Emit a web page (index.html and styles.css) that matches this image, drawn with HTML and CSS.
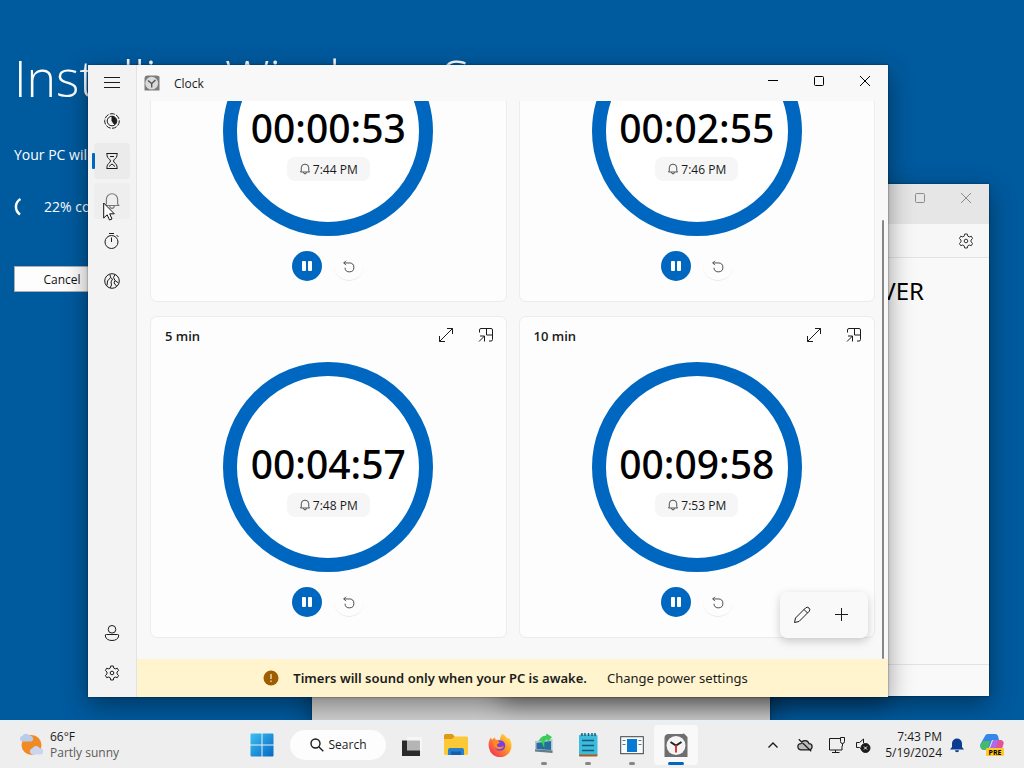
FILE: index.html
```html
<!DOCTYPE html>
<html lang="en">
<head>
<meta charset="utf-8">
<title>Clock</title>
<link rel="stylesheet" href="styles.css">
</head>
<body>
<svg class="defs" aria-hidden="true">
  <symbol id="bell" viewBox="0 0 16 16"><path d="M2 12 L3 10.500 V6.500 a5 5 0 0 1 10 0 V10.500 L14 12 Z M6 12.500 a2 2 0 0 0 4 0"/></symbol>
  <symbol id="gear" viewBox="0 0 16 16"><path d="M6.700 1h2.600l.5 2.100 1.400.8 2.100-.7 1.300 2.300-1.600 1.500v1.900l1.600 1.500-1.300 2.300-2.100-.7-1.400.8-.5 2.200H6.700l-.5-2.200-1.400-.8-2.100.7-1.300-2.300 1.600-1.500V7L1.400 5.500l1.300-2.300 2.100.7 1.400-.8z"/><circle cx="8" cy="8" r="1.800"/></symbol>
  <symbol id="expand" viewBox="0 0 16 16"><path d="M1.500 14.500 14.500 1.500M9 1.500h5.500V7M1.500 9v5.500H7"/></symbol>
  <symbol id="pin" viewBox="0 0 16 16"><path d="M1.500 5.500V3a1.500 1.500 0 0 1 1.500-1.500H13A1.500 1.500 0 0 1 14.500 3V12.500a1.500 1.500 0 0 1-1.500 1.500H11M8.500 1.500V8H14.500M1 14.500 6.500 9M2 9H6.500V14.500"/></symbol>
  <symbol id="reset" viewBox="0 0 16 16"><path d="M2 4.500H8.500a5.100 5.100 0 1 1-5.100 5.500M4.500 2 2 4.500 4.500 7"/></symbol>
  <symbol id="max" viewBox="0 0 12 12"><rect x="1.500" y="1.500" width="9" height="9" rx="1"/></symbol>
  <symbol id="close" viewBox="0 0 12 12"><path d="M1 1 11 11M11 1 1 11"/></symbol>
</svg>
<div class="desktop">
  <main class="workspace">
    <section class="installer">
      <h1>Installing Windows Server</h1>
      <p class="notice">Your PC will restart several times</p>
      <div class="progress">
        <svg class="spinner" viewBox="0 0 16 20"><path d="M6.500 2C0.500 5.500 0.500 13.500 6 17.500" /></svg>
        <span>22% complete</span>
      </div>
      <button class="cancel" type="button">Cancel</button>
    </section>

    <section class="window sheet"></section>

    <section class="window notes">
      <header class="notes-title">
        <button type="button" aria-label="Maximize"><svg class="ico s12"><use href="#max"/></svg></button>
        <button type="button" aria-label="Close"><svg class="ico s12"><use href="#close"/></svg></button>
      </header>
      <div class="notes-tools"><button type="button" aria-label="Settings"><svg class="ico s16"><use href="#gear"/></svg></button></div>
      <div class="notes-body">SERVER</div>
      <footer class="notes-status"></footer>
    </section>

    <section class="window clock">
      <nav class="rail">
        <button class="rail-item menu" type="button" aria-label="Menu"><svg class="ico s16" viewBox="0 0 16 16"><path d="M0 3.500H16M0 8.500H16M0 13.500H16"/></svg></button>
        <button class="rail-item" type="button" aria-label="Focus"><svg class="ico s16" viewBox="0 0 16 16"><circle cx="8" cy="8" r="7.300" stroke-dasharray="5 1.400"/><circle cx="8" cy="8" r="4.800"/><path class="solid" d="M8 4V8L10.500 11.500A4.500 4.500 0 0 0 8 3.500Z"/></svg></button>
        <button class="rail-item active" type="button" aria-label="Timer"><svg class="ico s16" viewBox="0 0 16 16"><path d="M2.500.5H13.500M2.500 15.500H13.500M3 .5V2.500C3 5 6.500 6.500 6.500 8S3 11 3 13.500V15.500M13 .5V2.500C13 5 9.500 6.500 9.500 8S13 11 13 13.500V15.500M6 3.500H10M5 13.500 8 11 11 13.500"/></svg></button>
        <button class="rail-item hover" type="button" aria-label="Alarm"><svg class="ico s18"><use href="#bell"/></svg></button>
        <button class="rail-item" type="button" aria-label="Stopwatch"><svg class="ico s16" viewBox="0 0 16 16"><circle cx="7.500" cy="9" r="6.500"/><path d="M5 .5H10M7.500 4.500V9M12.500 2 14.500 4"/></svg></button>
        <button class="rail-item" type="button" aria-label="World clock"><svg class="ico s16" viewBox="0 0 16 16"><circle cx="8" cy="8" r="7.300"/><path d="M6 1.500 6.500 4.500 3.500 8 3 12.500M6.500 4.500 8.500 6 7 9 7.500 12 6 15M11 1.500 9.500 4.500 11 7.500 10 10 12.500 13M11 7.500 14.500 10"/></svg></button>
        <span class="rail-space"></span>
        <button class="rail-item" type="button" aria-label="Account"><svg class="ico s16" viewBox="0 0 16 16"><circle cx="8" cy="4.300" r="3.800"/><path d="M2.500 9.500H13.500a1.200 1.200 0 0 1 1.200 1.500C14.200 14 11.500 15.500 8 15.500S1.800 14 1.300 11A1.200 1.200 0 0 1 2.500 9.500Z"/></svg></button>
        <button class="rail-item" type="button" aria-label="Settings"><svg class="ico s16"><use href="#gear"/></svg></button>
      </nav>
      <div class="pane">
        <header class="titlebar">
          <svg class="app-icon" viewBox="0 0 16 16"><path d="M3.500.5H13L15.500 1.500V15.500H.5V3.500a3 3 0 0 1 3-3Z" fill="#7c7c7c"/><circle cx="7.700" cy="8.200" r="6.400" fill="#dadada"/><path d="M4 5.500 7.700 8.500 11.500 5M7.700 8.500V12.500" stroke="#555" stroke-width="1.400" fill="none"/></svg>
          <span class="app-name">Clock</span>
          <button type="button" aria-label="Minimize"><svg class="ico s12" viewBox="0 0 12 12"><path d="M1 5.500H11"/></svg></button>
          <button type="button" aria-label="Maximize"><svg class="ico s12"><use href="#max"/></svg></button>
          <button type="button" aria-label="Close"><svg class="ico s12"><use href="#close"/></svg></button>
        </header>
        <div class="scroller">
          <div class="timers">
            <article class="card">
              <header class="card-head"></header>
              <div class="ring"><time class="left">00:00:53</time><span class="due"><svg class="ico s12"><use href="#bell"/></svg>7:44 PM</span></div>
              <div class="controls"><button class="pause" type="button" aria-label="Pause"><svg viewBox="0 0 12 12"><rect x="1" y="1" width="4" height="10" rx="1"/><rect x="7" y="1" width="4" height="10" rx="1"/></svg></button><button class="reset" type="button" aria-label="Reset"><svg class="ico s14"><use href="#reset"/></svg></button></div>
            </article>
            <article class="card">
              <header class="card-head"></header>
              <div class="ring"><time class="left">00:02:55</time><span class="due"><svg class="ico s12"><use href="#bell"/></svg>7:46 PM</span></div>
              <div class="controls"><button class="pause" type="button" aria-label="Pause"><svg viewBox="0 0 12 12"><rect x="1" y="1" width="4" height="10" rx="1"/><rect x="7" y="1" width="4" height="10" rx="1"/></svg></button><button class="reset" type="button" aria-label="Reset"><svg class="ico s14"><use href="#reset"/></svg></button></div>
            </article>
            <article class="card">
              <header class="card-head"><h2>5 min</h2><button type="button" aria-label="Expand"><svg class="ico s16"><use href="#expand"/></svg></button><button type="button" aria-label="Keep on top"><svg class="ico s16"><use href="#pin"/></svg></button></header>
              <div class="ring"><time class="left">00:04:57</time><span class="due"><svg class="ico s12"><use href="#bell"/></svg>7:48 PM</span></div>
              <div class="controls"><button class="pause" type="button" aria-label="Pause"><svg viewBox="0 0 12 12"><rect x="1" y="1" width="4" height="10" rx="1"/><rect x="7" y="1" width="4" height="10" rx="1"/></svg></button><button class="reset" type="button" aria-label="Reset"><svg class="ico s14"><use href="#reset"/></svg></button></div>
            </article>
            <article class="card">
              <header class="card-head"><h2>10 min</h2><button type="button" aria-label="Expand"><svg class="ico s16"><use href="#expand"/></svg></button><button type="button" aria-label="Keep on top"><svg class="ico s16"><use href="#pin"/></svg></button></header>
              <div class="ring"><time class="left">00:09:58</time><span class="due"><svg class="ico s12"><use href="#bell"/></svg>7:53 PM</span></div>
              <div class="controls"><button class="pause" type="button" aria-label="Pause"><svg viewBox="0 0 12 12"><rect x="1" y="1" width="4" height="10" rx="1"/><rect x="7" y="1" width="4" height="10" rx="1"/></svg></button><button class="reset" type="button" aria-label="Reset"><svg class="ico s14"><use href="#reset"/></svg></button></div>
            </article>
          </div>
          <span class="thumb"></span>
          <div class="fab">
            <button type="button" aria-label="Edit timers"><svg class="ico s18" viewBox="0 0 18 18"><path d="M1.500 16.500 2.500 12 12.500 2a2.300 2.300 0 0 1 3.500 3.500L6 15.500ZM11 3.500 14.500 7"/></svg></button>
            <button type="button" aria-label="Add timer"><svg class="ico s16" viewBox="0 0 16 16"><path d="M7.500 1V14M1 7.500H14"/></svg></button>
          </div>
        </div>
        <div class="banner">
          <svg class="warn" viewBox="0 0 16 16"><circle cx="8" cy="8" r="7.500" fill="#9d5d00"/><path d="M8 4V9M8 10.500V12" stroke="#fff4ce" stroke-width="1.200"/></svg>
          <strong>Timers will sound only when your PC is awake.</strong>
          <a href="#power">Change power settings</a>
        </div>
      </div>
    </section>
    <svg class="cursor" viewBox="0 0 12 19"><path d="M.7 1V16L4.200 12.800 6.500 18 9 17 6.700 11.800H11.300Z" fill="#fff" stroke="#111"/></svg>
  </main>

  <footer class="taskbar">
    <a class="weather" href="#weather">
      <svg class="s24" viewBox="0 0 24 24"><circle cx="12.500" cy="12" r="10" fill="#f08a24"/><path d="M3 8.500a3 3 0 0 1 .5-5.800A4 4 0 0 1 10.500 3a2.800 2.800 0 0 1 1.500 5.500Z" fill="#b9cdea"/><path d="M13 21.500a3.200 3.200 0 0 1 .5-6.200A4.200 4.200 0 0 1 21 15.500a3 3 0 0 1 1 6Z" fill="#ccd5ef"/></svg>
      <span><b>66°F</b><i>Partly sunny</i></span>
    </a>
    <div class="apps">
      <button class="app" type="button" aria-label="Start"><svg class="s24" viewBox="0 0 24 24"><defs><linearGradient id="w" x1="0" y1="0" x2="1" y2="1"><stop offset="0" stop-color="#3cc1f2"/><stop offset="1" stop-color="#0567c4"/></linearGradient></defs><path fill="url(#w)" d="M.5 1.500A1 1 0 0 1 1.500.5H11.500V11.500H.5ZM12.500.5H22.500A1 1 0 0 1 23.500 1.500V11.500H12.500ZM.5 12.500H11.500V23.500H1.500A1 1 0 0 1 .5 22.500ZM12.500 12.500H23.500V22.500A1 1 0 0 1 22.500 23.500H12.500Z"/></svg></button>
      <button class="search" type="button"><svg class="ico s14 bold" viewBox="0 0 14 14"><circle cx="5.500" cy="5.500" r="4.500"/><path d="M9 9 13.300 13.300"/></svg>Search</button>
      <button class="app" type="button" aria-label="Task view"><svg class="s24" viewBox="0 0 24 24"><rect x="7" y="4" width="15" height="14" rx="1" fill="#f7f7f7" opacity=".9"/><path d="M2 7.500H7V17H20V23H2Z" fill="#2b2b2b"/><rect x="7" y="7.500" width="13" height="10" fill="#b5b5b5"/></svg></button>
      <button class="app" type="button" aria-label="File Explorer"><svg class="s24" viewBox="0 0 24 24"><path d="M0 2.500A1.500 1.500 0 0 1 1.500 1H8.500L11 4V7H0Z" fill="#dc9a18"/><path d="M0 6H8L10.500 3.500H22.500A1.500 1.500 0 0 1 24 5V20.500A1.500 1.500 0 0 1 22.500 22H1.500A1.500 1.500 0 0 1 0 20.500Z" fill="#fbc936"/><path d="M4 22V17a2 2 0 0 1 2-2H18a2 2 0 0 1 2 2V22Z" fill="#2580cf"/><path d="M7 18.500H17V22H7Z" fill="#155ea8"/></svg></button>
      <button class="app" type="button" aria-label="Firefox"><svg class="s24" viewBox="0 0 24 24"><defs><linearGradient id="f" x1="1" y1="0" x2="0" y2="1"><stop offset="0" stop-color="#ffe83b"/><stop offset=".45" stop-color="#ff9226"/><stop offset="1" stop-color="#ee1c62"/></linearGradient></defs><path fill="url(#f)" d="M14 1C17 2 19 5 20 6L20.500 4.500C23.500 8 24 12 23 16A11.300 11.300 0 0 1 1 15C0 11 1 7 3 4.500L4 7 6.500 4.500 8 7C9 6.500 11 6.500 12 7 12 4.500 13 2.500 14 1Z"/><circle cx="12" cy="12.500" r="5.300" fill="#7b3fe0"/><path d="M5 8C8 7 10.500 8 12 9.500L9 11.500C8 14 12 15 16 13 14 17.500 7.500 17 6 13Z" fill="#ff8a22"/></svg></button>
      <button class="app" type="button" aria-label="Setup"><svg class="s24" viewBox="0 0 24 24"><path d="M3 8 20.500 6V19L3 18Z" fill="#b2c6d4"/><path d="M4.500 10 19 8V17L4.500 16Z" fill="#246f9d"/><path d="M3 18.500 20.500 20V17.500L3 16.500Z" fill="#667a88"/><path d="M6.500 8.500C8 4.500 11 2.500 14 2.800L14.500.5 20 4 16 8.500 15 6.500C12.500 7 12 10 12.500 14.500 10.500 13 10 10.500 10 8Z" fill="#38cf56"/></svg><span class="dot"></span></button>
      <button class="app" type="button" aria-label="Notepad"><svg class="s24" viewBox="0 0 24 24"><rect x="3" y="1.500" width="18.500" height="21" rx="1.500" fill="#3dbbdc"/><path d="M3 21.500H21.500V22.500a1 1 0 0 1-1 1H4a1 1 0 0 1-1-1Z" fill="#ad5b1b"/><path d="M6 0V3M9 0V3M12.500 0V3M16 0V3M19 0V3M6 7.500H18M6 12.500H18M6 17.500H18" stroke="#165978" stroke-width="1.400"/></svg><span class="dot"></span></button>
      <button class="app" type="button" aria-label="Viewer"><svg class="s24" viewBox="0 0 24 24"><rect x=".7" y="3.700" width="22.600" height="17" fill="#fafafa" stroke="#3b4248"/><rect x="7" y="6" width="10" height="13" fill="#087ad4"/><path d="M2.500 7.500H5.500M2.500 11.500H5.500M18.500 7.500H21.500M18.500 11.500H21.500" stroke="#52748e"/></svg><span class="dot"></span></button>
      <button class="app current" type="button" aria-label="Clock"><svg class="s24" viewBox="0 0 24 24"><path d="M4 1H18L20 .5 23.500 4V24H.5V5a4 4 0 0 1 3.500-4Z" fill="#6e6e6e"/><circle cx="12" cy="12.500" r="9.500" fill="#f4f4f4"/><path d="M6.500 9 12 12.500 17.500 9" stroke="#222" stroke-width="2" fill="none"/><path d="M12 12V19.500" stroke="#d8262b" stroke-width="1.800"/></svg><span class="dot"></span></button>
    </div>
    <div class="tray">
      <button type="button" class="t32" aria-label="Hidden icons"><svg class="ico s12 bold" viewBox="0 0 12 12"><path d="M1.500 8.500 6 4 10.500 8.500"/></svg></button>
      <button type="button" class="t32" aria-label="Cloud storage"><svg class="ico s16 bold" viewBox="0 0 18 18"><path class="grey" d="M4.500 14.500A3.500 3.500 0 0 1 4.500 7.500 4.700 4.700 0 0 1 13.500 7.500 3.500 3.500 0 0 1 13.500 14.500ZM2 2.500 16 16"/></svg></button>
      <button type="button" class="t32" aria-label="Network"><svg class="ico s18" viewBox="0 0 18 18"><path d="M12 2.500H1.500V14H14V10M7.500 14V16.500M4 16.500H11.500M12.500 1.500H16.500V5.500a2 2 0 0 1-4 0ZM14.500 7.500V10"/></svg></button>
      <button type="button" class="t20" aria-label="Sound muted"><svg class="ico s16" viewBox="0 0 16 16"><path d="M8 13.500 4.500 10.500H1.500V5.500H4.500L8.500 2V6"/><circle class="solid" cx="10.500" cy="11" r="4.500"/><path d="M9 9.500 12 12.500M12 9.500 9 12.500" stroke="#fff"/></svg></button>
      <time class="now">7:43 PM<br>5/19/2024</time>
      <button type="button" class="t30" aria-label="Notifications"><svg class="s16" viewBox="0 0 16 16"><path d="M1 12.500 3 10V6.500a5 5 0 0 1 10 0V10L15 12.500ZM6 13.200h4a2 2 0 0 1-4 0Z" fill="#0a3c91"/></svg></button>
      <button type="button" class="t40" aria-label="Copilot"><svg class="s24" viewBox="0 0 24 24"><path d="M5 3a3 3 0 0 1 3-2H15a3 3 0 0 1 3 2L19 7H12L9 15H3C0 15 0 13 .5 11Z" fill="#3486e8"/><path d="M3 8H10L8 17H3C0 16 0 13 1 11Z" fill="#46b96a"/><path d="M14 7H21a3 3 0 0 1 2.500 4L21 19H12Z" fill="#e0549b"/><path d="M13 7H18L16 15H10Z" fill="#af6ae6"/><rect x="6" y="15" width="18" height="8" rx="1" fill="#ffc928"/><text x="15" y="22" class="pre">PRE</text></svg></button>
    </div>
  </footer>
</div>
</body>
</html>
```
FILE: styles.css
```css
* { box-sizing: border-box; }
body { margin: 0; font-family: "Open Sans", "Noto Sans", sans-serif; font-size: 12px; color: #1b1b1b; }
button { font: inherit; color: inherit; border: 0; padding: 0; background: none; display: flex; align-items: center; justify-content: center; }
h1, h2, p { margin: 0; }
a { color: inherit; text-decoration: none; }
.defs { position: absolute; width: 0; height: 0; }
.ico { fill: none; stroke: currentColor; stroke-width: 1; flex: none; }
.bold { stroke-width: 1.4; }
.solid { fill: currentColor; }
.grey { fill: #bbb; }
.s12 { width: 12px; height: 12px; }
.s14 { width: 14px; height: 14px; }
.s16 { width: 16px; height: 16px; }
.s18 { width: 18px; height: 18px; }
.s24 { width: 24px; height: 24px; flex: none; }

.desktop { min-height: 100vh; display: flex; flex-direction: column; background: #005a9e; }
.workspace { flex: 1; position: relative; overflow: hidden; }
.window { position: absolute; overflow: hidden; box-shadow: 0 0 2px rgba(0, 0, 0, .5), 0 8px 24px rgba(0, 0, 0, .4); }

.installer { color: #fff; padding: 44px 14px; display: flex; flex-direction: column; align-items: flex-start; }
.installer h1 { font-size: 50px; font-weight: 300; line-height: 68px; white-space: nowrap; }
.notice { font-size: 14px; line-height: 20px; margin-top: 33px; }
.progress { display: flex; align-items: center; gap: 14px; font-size: 14px; line-height: 20px; margin: 32px 0 49px; }
.spinner { width: 16px; height: 20px; fill: none; stroke: #fff; stroke-width: 2.5; }
.cancel { width: 96px; height: 26px; background: #fdfdfd; color: #111; border: 1px solid #adadad; }

.sheet { left: 312px; right: 254px; top: 400px; bottom: 0; background: #d0d0d0; }
.notes { left: 500px; right: 35px; top: 184px; bottom: 24px; background: #f9f9f9; display: flex; flex-direction: column; }
.notes-title { height: 40px; padding-bottom: 12px; background: #e6e6e6; color: #8a8a8a; display: flex; justify-content: flex-end; }
.notes-title button { width: 46px; }
.notes-tools { height: 34px; padding-right: 15px; border-bottom: 1px solid #e3e3e3; background: #f7f7f7; display: flex; justify-content: flex-end; align-items: center; color: #333; }
.notes-body { flex: 1; padding: 16px 65px 0 0; font-family: "Noto Sans", sans-serif; font-size: 24px; line-height: 34px; text-align: right; color: #000; }
.notes-status { height: 32px; border-top: 1px solid #e3e3e3; }

.clock { left: 88px; right: 136px; top: 65px; bottom: 23px; background: #f8f8f8; display: flex; }
.rail { width: 49px; padding: 0 6px 6px; background: #f3f3f3; border-right: 1px solid #e3e3e3; display: flex; flex-direction: column; gap: 4px; }
.rail-item { width: 36px; height: 36px; border-radius: 4px; flex: none; }
.rail-item.menu { height: 34px; }
.rail-item.active { background: #ebebeb; position: relative; }
.rail-item.active::before { content: ""; position: absolute; left: -2px; top: 10px; width: 3px; height: 16px; background: #0067c0; border-radius: 1px; }
.rail-item.hover { background: #eee; color: #777; }
.rail-space { flex: 1; }
.pane { flex: 1; min-width: 0; display: flex; flex-direction: column; }
.titlebar { height: 36px; padding-left: 7px; display: flex; align-items: center; }
.titlebar button { width: 46px; height: 32px; align-self: flex-start; color: #000; }
.app-icon { width: 16px; height: 16px; }
.app-name { margin-left: 14px; flex: 1; }
.scroller { flex: 1; min-height: 0; position: relative; overflow: hidden; padding: 0 13px 21px; display: flex; flex-direction: column; justify-content: flex-end; }
.timers { display: grid; grid-template-columns: 1fr 1fr; gap: 14px 12px; }
.card { background: #fdfdfd; border: 1px solid #ececec; border-radius: 7px; padding-bottom: 20px; display: flex; flex-direction: column; align-items: center; }
.card-head { align-self: stretch; height: 38px; margin-bottom: 7px; padding-left: 14px; display: flex; align-items: center; }
.card-head h2 { flex: 1; font-size: 13px; font-weight: 600; }
.card-head button { width: 40px; height: 36px; align-self: flex-start; }
.ring { width: 210px; height: 210px; border: 14px solid #0067c0; border-radius: 50%; background: #fff; display: flex; flex-direction: column; align-items: center; padding-top: 63px; }
.left { font-family: "Noto Sans", sans-serif; font-size: 39px; line-height: 50px; font-weight: 500; color: #000; }
.due { margin-top: 4px; height: 24px; padding: 0 12px; border-radius: 8px; background: #f6f6f6; font-size: 12px; display: flex; align-items: center; gap: 2px; }
.controls { margin-top: 15px; display: flex; gap: 12px; }
.controls button { width: 30px; height: 30px; border-radius: 50%; }
.pause { background: #0067c0; }
.pause svg { width: 12px; height: 12px; fill: #fff; }
.reset { border-bottom: 1px solid #e8e8e8; color: #333; }
.thumb { position: absolute; right: 4px; top: 119px; bottom: 0; width: 2px; background: #868686; border-radius: 1px; }
.fab { position: absolute; right: 20px; bottom: 21px; height: 46px; padding: 0 6px 0 2px; border-radius: 7px; background: #f9f9f9; box-shadow: 0 3px 10px rgba(0, 0, 0, .2); display: flex; }
.fab button { width: 40px; height: 46px; }
.banner { height: 38px; padding-right: 14px; background: #fff4ce; display: flex; align-items: center; justify-content: center; font-family: "Noto Sans", sans-serif; font-size: 13px; }
.warn { width: 16px; height: 16px; margin-right: 14px; }
.banner strong { font-weight: 600; }
.banner a { margin-left: 20px; }
.cursor { position: absolute; left: 103px; top: 202px; width: 12px; height: 19px; }

.taskbar { height: 48px; background: #eee; border-top: 1px solid #e4f0fa; display: flex; align-items: center; }
.weather { width: 240px; padding-left: 19px; display: flex; align-items: center; gap: 7px; }
.weather b, .weather i { display: block; font-style: normal; font-weight: 400; line-height: 16px; }
.weather i { color: #5b5b5b; }
.apps { display: flex; align-items: center; }
.app { width: 44px; height: 40px; position: relative; border-radius: 4px; }
.app.current { background: #f9f9f9; }
.dot { position: absolute; left: 19px; bottom: 0; width: 6px; height: 3px; border-radius: 2px; background: #868686; }
.current .dot { left: 14px; width: 16px; background: #0067c0; }
.search { width: 96px; height: 30px; margin: 0 4px 0 6px; border-radius: 15px; background: #fdfdfd; gap: 5px; }
.tray { margin-left: auto; padding-right: 12px; display: flex; align-items: center; }
.tray button { height: 40px; }
.t20 { width: 20px; }
.t30 { width: 30px; }
.t32 { width: 32px; }
.t40 { width: 40px; }
.now { width: 69px; text-align: right; line-height: 16px; font-size: 12px; }
.pre { font-size: 7px; font-weight: 700; text-anchor: middle; }
```
